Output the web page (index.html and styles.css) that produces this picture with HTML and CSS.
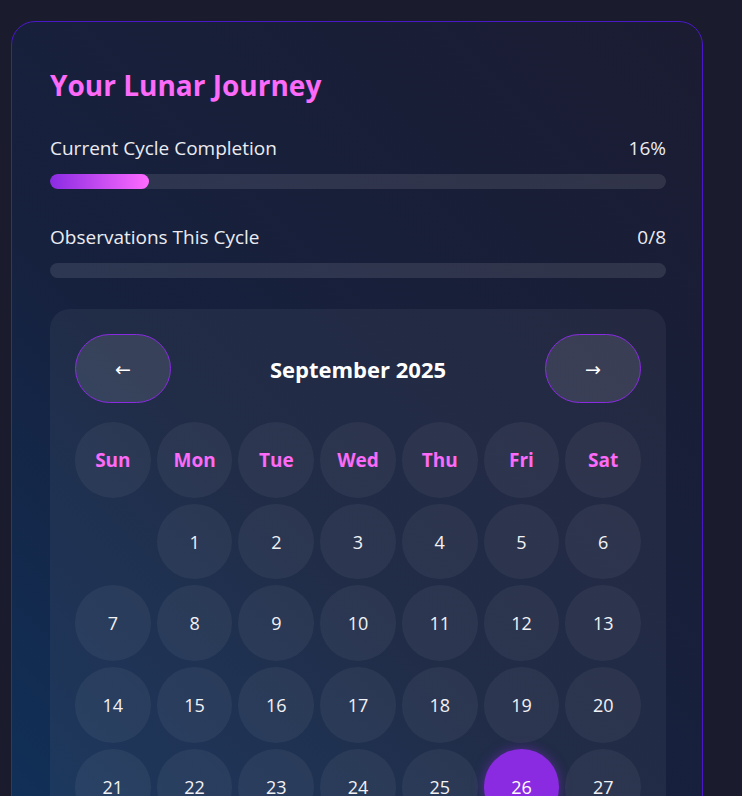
FILE: index.html
```html
<!DOCTYPE html>
<html lang="en">
<head>
<meta charset="utf-8">
<title>Your Lunar Journey</title>
<link rel="stylesheet" href="styles.css">
</head>
<body>
<main class="page">
  <section class="card">
    <h2 class="card-title">Your Lunar Journey</h2>

    <div class="progress">
      <div class="progress-head"><span>Current Cycle Completion</span><span>16%</span></div>
      <div class="track"><div class="fill" style="width:16%"></div></div>
    </div>

    <div class="progress progress-last">
      <div class="progress-head"><span>Observations This Cycle</span><span>0/8</span></div>
      <div class="track"><div class="fill" style="width:0%"></div></div>
    </div>

    <div class="calendar">
      <div class="cal-head">
        <button class="nav-btn" type="button">←</button>
        <h3 class="month">September 2025</h3>
        <button class="nav-btn" type="button">→</button>
      </div>
      <div class="grid">
        <div class="cell wd">Sun</div>
        <div class="cell wd">Mon</div>
        <div class="cell wd">Tue</div>
        <div class="cell wd">Wed</div>
        <div class="cell wd">Thu</div>
        <div class="cell wd">Fri</div>
        <div class="cell wd">Sat</div>
        <div class="cell empty"></div>
        <div class="cell">1</div>
        <div class="cell">2</div>
        <div class="cell">3</div>
        <div class="cell">4</div>
        <div class="cell">5</div>
        <div class="cell">6</div>
        <div class="cell">7</div>
        <div class="cell">8</div>
        <div class="cell">9</div>
        <div class="cell">10</div>
        <div class="cell">11</div>
        <div class="cell">12</div>
        <div class="cell">13</div>
        <div class="cell">14</div>
        <div class="cell">15</div>
        <div class="cell">16</div>
        <div class="cell">17</div>
        <div class="cell">18</div>
        <div class="cell">19</div>
        <div class="cell">20</div>
        <div class="cell">21</div>
        <div class="cell">22</div>
        <div class="cell">23</div>
        <div class="cell">24</div>
        <div class="cell">25</div>
        <div class="cell today">26</div>
        <div class="cell">27</div>
        <div class="cell">28</div>
        <div class="cell">29</div>
        <div class="cell">30</div>
      </div>
    </div>
  </section>
</main>
</body>
</html>
```

FILE: styles.css
```css
* { box-sizing: border-box; }

html, body {
  margin: 0;
  background: #1b1b2e;
  font-family: "Open Sans", "Noto Sans", sans-serif;
  color: #e8e8f0;
}

.page {
  padding: 21px 39px 40px 11px;
}

.card {
  border: 1px solid #4a18c8;
  border-radius: 24px;
  padding: 38px 36px 38px 38px;
  background: linear-gradient(45deg, #0f3460 0%, #16213e 45%, #1b1c32 100%);
}

.card-title {
  margin: 0 0 25px;
  font-size: 28px;
  line-height: 50px;
  font-weight: 700;
  color: #fb6af8;
}

.progress { margin-bottom: 35px; }
.progress-last { margin-bottom: 31px; }

.progress-head {
  display: flex;
  justify-content: space-between;
  font-size: 19px;
  line-height: 27px;
  margin-bottom: 12px;
  color: #ececf2;
}

.track {
  height: 15px;
  border-radius: 8px;
  background: rgba(255, 255, 255, 0.1);
  overflow: hidden;
}

.fill {
  height: 100%;
  border-radius: 8px;
  background: linear-gradient(90deg, #8a2be2, #ff6bff);
}

.calendar {
  border-radius: 20px;
  padding: 25px;
  background: rgba(255, 255, 255, 0.05);
}

.cal-head {
  display: flex;
  align-items: center;
  justify-content: space-between;
  margin-bottom: 19px;
}

.nav-btn {
  width: 96px;
  height: 69px;
  border-radius: 35px;
  border: 1px solid #8a2be2;
  background: rgba(255, 255, 255, 0.1);
  color: #ffffff;
  font-family: "DejaVu Sans", sans-serif;
  font-size: 19px;
  padding: 0;
}

.month {
  margin: 0;
  font-size: 22px;
  font-weight: 700;
  color: #ffffff;
}

.grid {
  display: grid;
  grid-template-columns: repeat(7, 1fr);
  gap: 6px;
}

.cell {
  aspect-ratio: 1;
  border-radius: 50%;
  display: flex;
  align-items: center;
  justify-content: center;
  background: rgba(255, 255, 255, 0.05);
  font-size: 18px;
  color: #f2f2f6;
}

.cell.wd {
  font-weight: 700;
  font-size: 19px;
  color: #fb6af8;
}

.cell.empty { background: transparent; }

.cell.today {
  background: #8a2be2;
  box-shadow: 0 0 12px rgba(138, 43, 226, 0.5);
  color: #ffffff;
}
```
